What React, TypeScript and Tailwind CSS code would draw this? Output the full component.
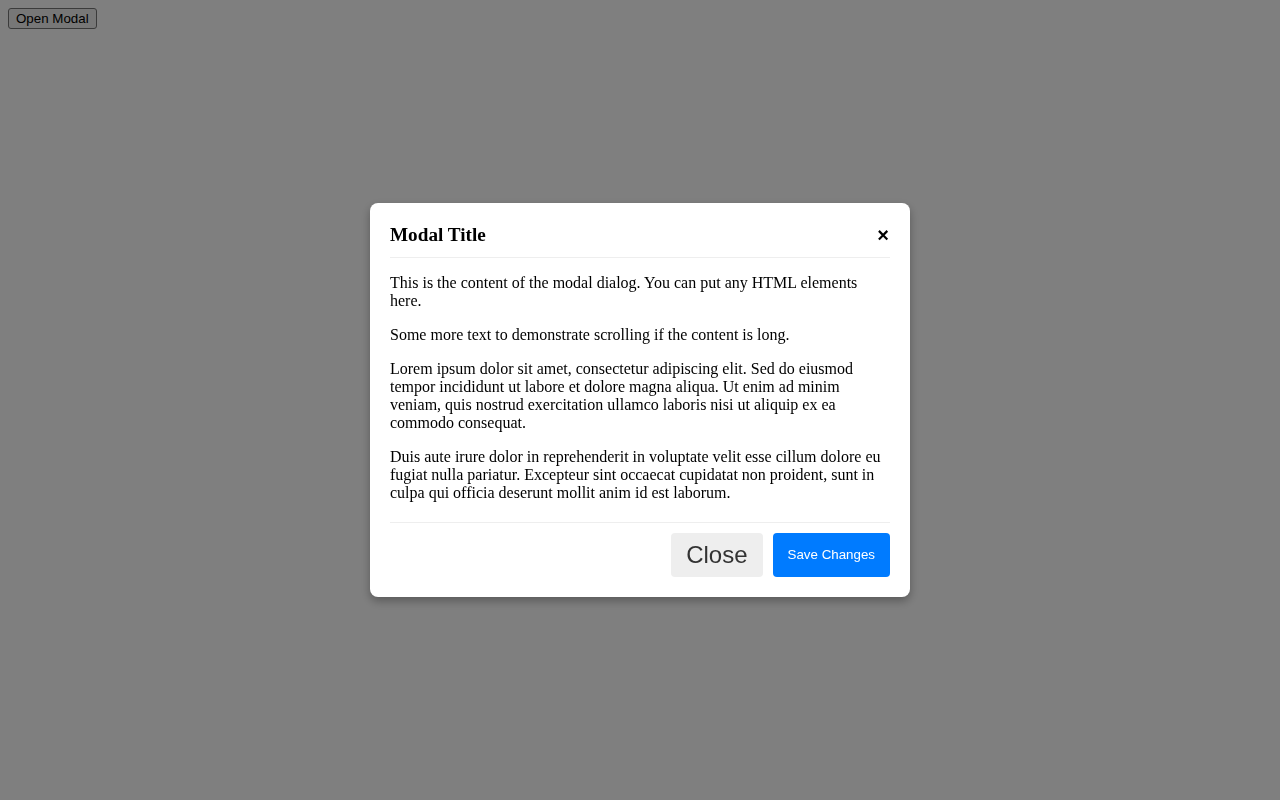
export default function App() {
  return (
    <div className="min-h-screen bg-white font-['Liberation_Serif',serif] text-black">
      <button
        type="button"
        className="m-2 rounded-[3px] border border-[#767676] bg-[#efefef] px-[7px] py-[2px] font-['Liberation_Sans',Arial,sans-serif] text-[13.33px] leading-[15px] text-black"
      >
        Open Modal
      </button>

      <div className="fixed inset-0 flex items-center justify-center bg-black/50">
        <div className="w-[540px] rounded-lg bg-white p-5 shadow-[0_4px_10px_rgba(0,0,0,0.3)]">
          <div className="flex items-center justify-between border-b border-[#eeeeee] pt-px pb-[11px]">
            <h3 className="m-0 text-[19.2px] font-bold leading-[22px]">Modal Title</h3>
            <button
              type="button"
              className="mr-px font-['Liberation_Sans',Arial,sans-serif] text-[20px] font-bold leading-[21px] text-black"
            >
              ×
            </button>
          </div>

          <div className="pt-4 pb-[20px] text-[16px] leading-[18px]">
            <p>This is the content of the modal dialog. You can put any HTML elements here.</p>
            <p className="mt-4">Some more text to demonstrate scrolling if the content is long.</p>
            <p className="mt-4">
              Lorem ipsum dolor sit amet, consectetur adipiscing elit. Sed do eiusmod tempor incididunt
              ut labore et dolore magna aliqua. Ut enim ad minim veniam, quis nostrud exercitation
              ullamco laboris nisi ut aliquip ex ea commodo consequat.
            </p>
            <p className="mt-4">
              Duis aute irure dolor in reprehenderit in voluptate velit esse cillum dolore eu fugiat
              nulla pariatur. Excepteur sint occaecat cupidatat non proident, sunt in culpa qui officia
              deserunt mollit anim id est laborum.
            </p>
          </div>

          <div className="flex justify-end gap-[10px] border-t border-[#eeeeee] pt-[10px] font-['Liberation_Sans',Arial,sans-serif]">
            <button
              type="button"
              className="rounded bg-[#eeeeee] px-[15px] py-[8px] text-[24px] leading-[28px] text-[#333333]"
            >
              Close
            </button>
            <button
              type="button"
              className="rounded bg-[#007bff] px-[15px] text-[13.33px] text-white"
            >
              Save Changes
            </button>
          </div>
        </div>
      </div>
    </div>
  );
}
